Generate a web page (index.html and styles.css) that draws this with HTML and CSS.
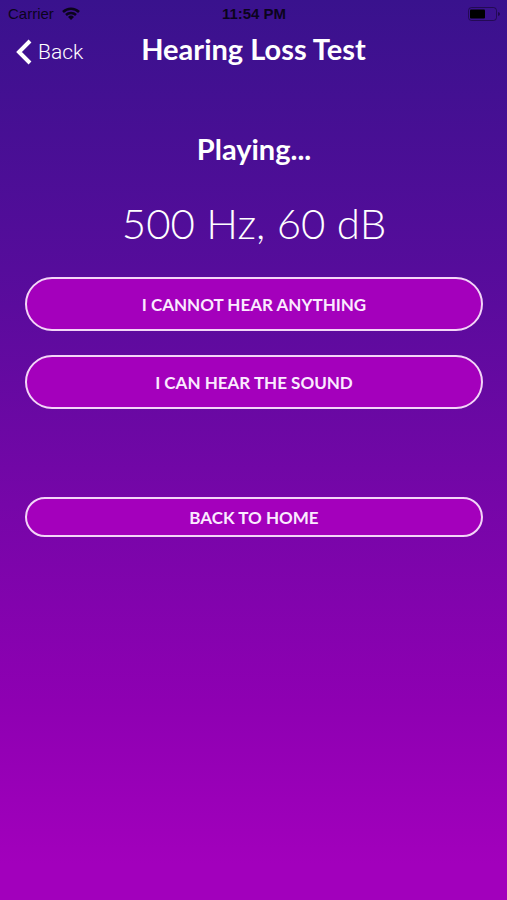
FILE: index.html
```html
<!DOCTYPE html>
<html lang="en">
<head>
<meta charset="utf-8">
<meta name="viewport" content="width=device-width, initial-scale=1">
<title>Hearing Loss Test</title>
<link rel="stylesheet" href="styles.css">
</head>
<body>
<div class="status">
  <div class="carrier"><span>Carrier</span>
    <svg class="wifi" viewBox="0 0 18 13" aria-hidden="true"><path d="M1 5A11.500 11.500 0 0 1 17 5M4 8A7.200 7.200 0 0 1 14 8" fill="none" stroke="currentColor" stroke-width="2.500"/><path d="M9 13L6 10A4.300 4.300 0 0 1 12 10Z" fill="currentColor"/></svg>
  </div>
  <time class="clock">11:54 PM</time>
  <svg class="battery" viewBox="0 0 32 14" aria-hidden="true"><rect x=".5" y=".5" width="28" height="13" rx="3" fill="none" stroke="currentColor" opacity=".5"/><rect x="2" y="2.500" width="15" height="9" rx="1" fill="#000"/><path d="M30 5Q32 5.500 32 7T30 9Z" fill="currentColor" opacity=".6"/></svg>
</div>
<header class="nav">
  <a class="back" href="#"><svg class="chevron" viewBox="0 0 16 26" aria-hidden="true"><path d="M14 2L3 13L14 24" fill="none" stroke="currentColor" stroke-width="4"/></svg><span>Back</span></a>
  <h1 class="title">Hearing Loss Test</h1>
</header>
<main class="test">
  <h2 class="state">Playing...</h2>
  <p class="tone">500 Hz, 60 dB</p>
  <div class="answers">
    <button class="btn" type="button">I CANNOT HEAR ANYTHING</button>
    <button class="btn" type="button">I CAN HEAR THE SOUND</button>
  </div>
  <button class="btn btn-small" type="button">BACK TO HOME</button>
</main>
</body>
</html>
```
FILE: styles.css
```css
* { box-sizing: border-box; }
body {
  margin: 0;
  min-height: 100vh;
  background: linear-gradient(#39128d, #560c9b 30%, #7606a8 56%, #8e00b2 78%, #a200bc 96%);
  color: #fff;
  font-family: Lato, sans-serif;
}
.status {
  display: grid;
  grid-template-columns: 1fr auto 1fr;
  align-items: center;
  height: 27px;
  padding: 0 7px 0 8px;
  color: #0b041c;
  font: 15px "Liberation Sans", sans-serif;
}
.carrier { display: flex; align-items: center; gap: 8px; }
.wifi { width: 18px; height: 13px; }
.clock { font-weight: 700; }
.battery { width: 32px; height: 14px; justify-self: end; }
.nav {
  display: grid;
  grid-template-columns: 1fr auto 1fr;
  align-items: center;
  height: 50px;
  padding: 0 16px;
}
.back {
  display: flex;
  align-items: center;
  gap: 6px;
  color: inherit;
  font: 300 21px Roboto, sans-serif;
  text-decoration: none;
}
.chevron { width: 16px; height: 26px; }
.title, .state { margin: 0; font-size: 29px; font-weight: 700; line-height: 36px; text-align: center; }
.title { padding-bottom: 6px; }
.test { display: flex; flex-direction: column; padding: 54px 24px 40px 25px; }
.tone { margin: 30px 0 28px; font-size: 42px; font-weight: 300; line-height: 52px; text-align: center; }
.answers { display: flex; flex-direction: column; gap: 24px; }
.btn {
  width: 100%;
  height: 54px;
  border: 2px solid #f3d5f8;
  border-radius: 27px;
  background: #a400bc;
  color: #fbeaff;
  font: 700 17px Lato, sans-serif;
}
.btn-small { height: 40px; margin-top: 88px; }
```
